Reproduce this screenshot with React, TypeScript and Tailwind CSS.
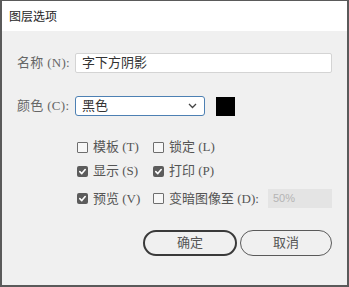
import React from 'react';

const FONT = { fontFamily: '"Liberation Serif", "Noto Sans CJK SC", serif' };

function Box({ checked }: { checked: boolean }) {
  if (checked) {
    return (
      <span className="flex h-[11px] w-[11px] shrink-0 items-center justify-center rounded-[2px] bg-[#5c5c5c]">
        <svg width="9" height="9" viewBox="0 0 10 10" fill="none">
          <path d="M2 5.2 L4.2 7.3 L8 2.8" stroke="#fff" strokeWidth="1.8" strokeLinecap="round" strokeLinejoin="round" />
        </svg>
      </span>
    );
  }
  return <span className="h-[11px] w-[11px] shrink-0 rounded-[1px] border border-[#6e6e6e] bg-[#f7f7f7]" />;
}

function Check({ label, checked }: { label: string; checked: boolean }) {
  return (
    <div className="flex items-center gap-[5px] text-[13px] text-[#555]">
      <Box checked={checked} />
      <span>{label}</span>
    </div>
  );
}

export default function App() {
  return (
    <div
      className="box-border flex h-[287px] w-[349px] flex-col border-x-2 border-t border-b-2 border-[#5a5a5a] bg-[#f0f0f0]"
      style={FONT}
    >
      {/* Title */}
      <div
        className="flex h-[30px] items-center bg-white pl-[7px] text-[12px] text-[#1e1e1e]"
        style={{ fontFamily: '"Noto Sans CJK SC", sans-serif' }}
      >
        图层选项
      </div>

      <div className="flex flex-col pl-[15px] pr-[15px]">
        {/* Name */}
        <div className="mt-[22px] flex h-[20px] items-center">
          <span className="w-[58px] text-[13px] tracking-[0.3px] text-[#666]">名称 (N):</span>
          <div className="flex h-[20px] w-[257px] items-center rounded-[2px] border border-[#d4d4d4] bg-white pl-[6px] text-[13px] text-[#333]">
            字下方阴影
          </div>
        </div>

        {/* Colour */}
        <div className="mt-[23px] flex h-[20px] items-center">
          <span className="w-[58px] text-[13px] tracking-[0.3px] text-[#666]">颜色 (C):</span>
          <div className="flex h-[20px] w-[130px] items-center justify-between rounded-[3px] border border-[#4d80b3] bg-white pl-[6px] pr-[7px] text-[13px] text-[#333]">
            <span>黑色</span>
            <svg width="9" height="6" viewBox="0 0 9 6" fill="none">
              <path d="M1 1 L4.5 4.5 L8 1" stroke="#444" strokeWidth="1.3" />
            </svg>
          </div>
          <div className="ml-[11px] h-[19px] w-[19px] bg-black" />
        </div>

        {/* Options */}
        <div className="ml-[60px] mt-[21px] flex flex-col">
          <div className="flex h-[20px] items-center">
            <div className="w-[76px]"><Check label="模板 (T)" checked={false} /></div>
            <Check label="锁定 (L)" checked={false} />
          </div>
          <div className="mt-[4px] flex h-[20px] items-center">
            <div className="w-[76px]"><Check label="显示 (S)" checked /></div>
            <Check label="打印 (P)" checked />
          </div>
          <div className="mt-[8px] flex h-[19px] items-center">
            <div className="w-[76px]"><Check label="预览 (V)" checked /></div>
            <Check label="变暗图像至 (D):" checked={false} />
            <div
              className="ml-auto flex h-[19px] w-[64px] items-center bg-[#e4e4e4] pl-[5px] text-[11px] text-[#b4b4b4]"
              style={{ fontFamily: '"Liberation Sans", sans-serif' }}
            >
              50%
            </div>
          </div>
        </div>

        {/* Buttons */}
        <div className="mt-[22px] flex justify-end gap-[3px]">
          <button className="flex h-[26px] w-[94px] items-center justify-center rounded-full border-2 border-[#3a3a3a] text-[13px] text-[#555]">
            确定
          </button>
          <button className="flex h-[26px] w-[92px] items-center justify-center rounded-full border border-[#5a5a5a] text-[13px] text-[#555]">
            取消
          </button>
        </div>
      </div>
    </div>
  );
}
